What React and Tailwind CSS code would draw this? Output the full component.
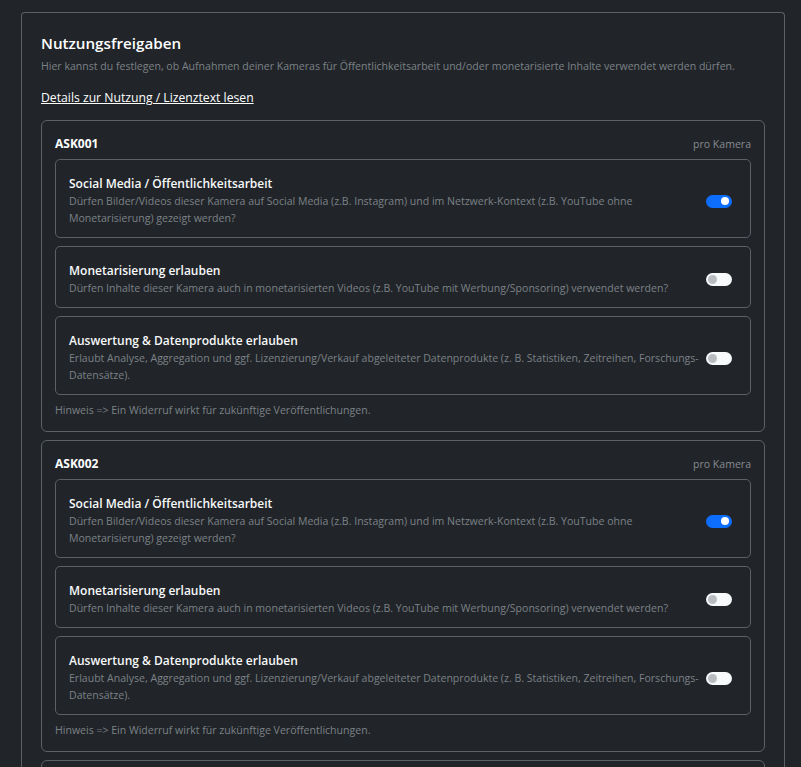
import React from "react";

const FONT = { fontFamily: '"Open Sans", "Noto Sans", sans-serif' };

function Switch({ on }) {
  return on ? (
    <div className="shrink-0 w-[26px] h-[13px] rounded-full bg-[#0d6efd] flex items-center justify-end pr-[3px]">
      <div className="w-[8px] h-[8px] rounded-full bg-white" />
    </div>
  ) : (
    <div className="shrink-0 w-[26px] h-[13px] rounded-full bg-[#f8f9fa] flex items-center justify-start pl-[2px]">
      <div className="w-[9px] h-[9px] rounded-full bg-[#b9bcc0]" />
    </div>
  );
}

function Option({ title, desc, on }) {
  return (
    <div className="border border-[#5c6166] rounded-[5px] pl-[13px] pr-[18px] pt-[15px] pb-[10px] flex items-center">
      <div className="flex-1 min-w-0">
        <div className="text-[12px] leading-[18px] font-semibold text-[#f8f9fa]">{title}</div>
        <div className="text-[10.55px] leading-[17px] text-[#7c8187]">{desc}</div>
      </div>
      <Switch on={on} />
    </div>
  );
}

function Camera({ id }) {
  return (
    <div className="border border-[#5c6166] rounded-[6px] px-[13px] pt-[14px] pb-[13px]">
      <div className="flex items-center justify-between">
        <div className="text-[12px] leading-[18px] font-bold text-white">{id}</div>
        <div className="text-[10.55px] leading-[18px] text-[#868b91]">pro Kamera</div>
      </div>
      <div className="mt-[6px] flex flex-col gap-2">
        <Option
          on
          title="Social Media / Öffentlichkeitsarbeit"
          desc="Dürfen Bilder/Videos dieser Kamera auf Social Media (z.B. Instagram) und im Netzwerk-Kontext (z.B. YouTube ohne Monetarisierung) gezeigt werden?"
        />
        <Option
          title="Monetarisierung erlauben"
          desc="Dürfen Inhalte dieser Kamera auch in monetarisierten Videos (z.B. YouTube mit Werbung/Sponsoring) verwendet werden?"
        />
        <Option
          title="Auswertung & Datenprodukte erlauben"
          desc="Erlaubt Analyse, Aggregation und ggf. Lizenzierung/Verkauf abgeleiteter Datenprodukte (z. B. Statistiken, Zeitreihen, Forschungs-Datensätze)."
        />
      </div>
      <div className="mt-[7px] text-[10.55px] leading-[16px] text-[#7c8187]">
        Hinweis =&gt; Ein Widerruf wirkt für zukünftige Veröffentlichungen.
      </div>
    </div>
  );
}

export default function App() {
  return (
    <div className="h-[767px] overflow-hidden bg-[#212529] pl-[21px] pr-[16px] pt-[12px]" style={FONT}>
      <div className="border border-[#5c6166] border-b-0 rounded-t-[4px] px-[19px] pt-[20px] h-[755px] overflow-hidden">
        <div className="text-[15.2px] leading-[20px] font-semibold text-white">Nutzungsfreigaben</div>
        <div className="mt-[5px] text-[10.55px] leading-[16px] text-[#7c8187]">
          Hier kannst du festlegen, ob Aufnahmen deiner Kameras für Öffentlichkeitsarbeit und/oder monetarisierte Inhalte verwendet werden dürfen.
        </div>
        <div className="mt-[15px] text-[12.2px] leading-[18px]">
          <a href="#" className="text-white underline">Details zur Nutzung / Lizenztext lesen</a>
        </div>
        <div className="mt-[13px] flex flex-col gap-2">
          <Camera id="ASK001" />
          <Camera id="ASK002" />
          <Camera id="ASK003" />
        </div>
      </div>
    </div>
  );
}
